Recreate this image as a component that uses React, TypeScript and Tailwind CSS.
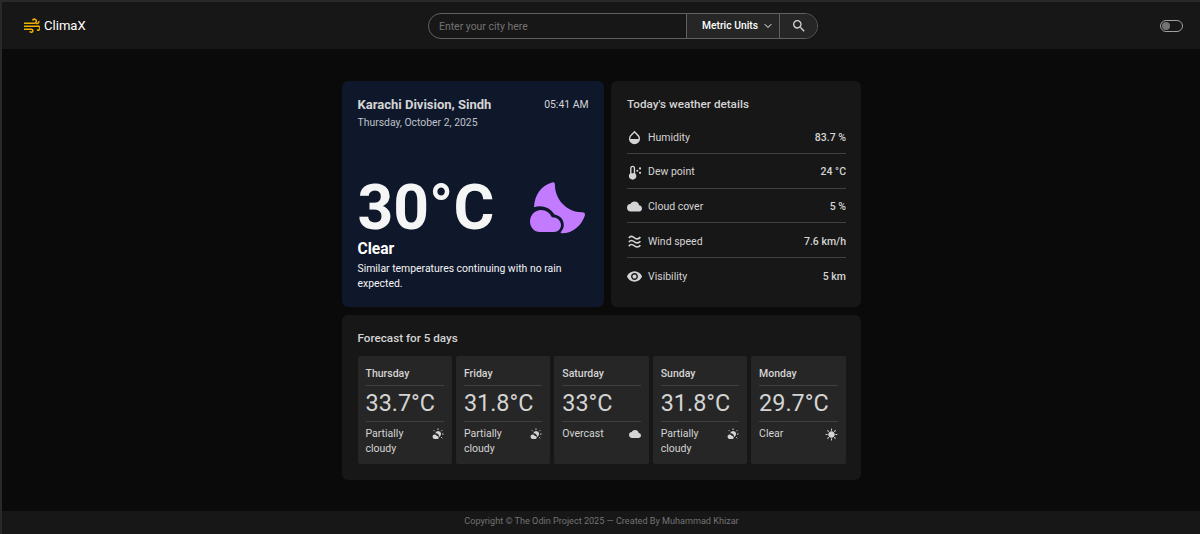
import React from 'react';
import { MdCloud, MdOpacity, MdRemoveRedEye, MdSearch, MdSunny } from 'react-icons/md';
import { ChevronDown } from 'lucide-react';

const WindIcon = () => (
  <svg viewBox="0 0 24 22" className="w-[16px] h-[15px]" fill="none" stroke="#f0b100" strokeWidth="2.300">
    <path d="M0 7.500H15.500A3 3 0 1 0 12.800 3.500M0 12H20.500A3 3 0 1 1 19.500 17.500M0 16.500H11A2.300 2.300 0 1 1 8.800 19.500M18 8H20A2.500 2.500 0 0 0 22 4.500" />
  </svg>
);

const MoonCloudIcon = () => (
  <svg viewBox="0 0 56 53" className="w-[56px] h-[53px]" fill="#c27aff">
    <path d="M4 25.200C4.500 13 11 3.500 22 .4Q25 -.3 24.900 2.500C25 18 37 30 51.500 30.300Q55.500 30 54.900 33.500C51.500 43.500 43 51.500 31.500 51.300L30.500 50.500C34 47 34.500 43 33 39C31.500 35 27.500 33 24.500 32.500C20 25 11 22.500 4 25.200Z" />
    <path d="M10 50C4 50 0 45 0 39.500C0 33 5 28 11 28C16 28 20 31 21.800 35.200C27 35 31 38.500 31 43C31 47 28 50 24 50Z" />
  </svg>
);

const DewPointIcon = () => (
  <svg viewBox="0 0 24 24" className="w-[15px] h-[15px] shrink-0" fill="currentColor">
    <path fillRule="evenodd" d="M9 1a4 4 0 0 0-4 4v8a6 6 0 1 0 8 0V5a4 4 0 0 0-4-4Zm-1.800 12V5a1.800 1.800 0 1 1 3.600 0v8Z" />
    <circle cx="16.500" cy="9" r="1.600" />
    <circle cx="20.800" cy="5.500" r="1.800" />
    <circle cx="20.800" cy="12.500" r="1.800" />
  </svg>
);

const WavesIcon = () => (
  <svg viewBox="0 0 24 24" className="w-[15px] h-[15px] shrink-0" fill="none" stroke="currentColor" strokeWidth="2.500">
    <path d="M3 6.500C5.500 3 8 3 12 6S18.500 8.500 21.500 5M3 13C5.500 9.500 8 9.500 12 12.500S18.500 15 21.500 11.500M3 19.500C5.500 16 8 16 12 19S18.500 21.500 21.500 18" />
  </svg>
);

const PartlyCloudyIcon = () => (
  <svg viewBox="0 0 24 24" className="w-[12px] h-[12px] shrink-0" fill="currentColor">
    <path d="M12 6a6 6 0 0 1 5 9.500l-3 2.500a6 6 0 0 0-7.500-7A6 6 0 0 1 12 6Z" />
    <path d="M5.500 22a4.500 4.500 0 1 1 4.300-6A3 3 0 1 1 11 22Z" />
    <path stroke="currentColor" strokeWidth="2" d="M12 1v3M3.500 4.500l2 2M20.500 4.500l-2 2M23 12h-3M18.500 18.500l2 2" />
  </svg>
);

const details = [
  { icon: <MdOpacity className="w-[15px] h-[15px] scale-110" />, label: 'Humidity', value: '83.7 %' },
  { icon: <DewPointIcon />, label: 'Dew point', value: '24 °C' },
  { icon: <MdCloud className="w-[15px] h-[15px]" />, label: 'Cloud cover', value: '5 %' },
  { icon: <WavesIcon />, label: 'Wind speed', value: '7.6 km/h' },
  { icon: <MdRemoveRedEye className="w-[15px] h-[15px] scale-110" />, label: 'Visibility', value: '5 km' },
];

const forecast = [
  { day: 'Thursday', temp: '33.7°C', text: 'Partially cloudy', icon: <PartlyCloudyIcon /> },
  { day: 'Friday', temp: '31.8°C', text: 'Partially cloudy', icon: <PartlyCloudyIcon /> },
  { day: 'Saturday', temp: '33°C', text: 'Overcast', icon: <MdCloud className="w-[12px] h-[12px] shrink-0" /> },
  { day: 'Sunday', temp: '31.8°C', text: 'Partially cloudy', icon: <PartlyCloudyIcon /> },
  { day: 'Monday', temp: '29.7°C', text: 'Clear', icon: <MdSunny className="w-[13px] h-[13px] shrink-0" /> },
];

function Header() {
  return (
    <header className="h-[47px] bg-[#171717] flex items-center pl-[22px] pr-[17px]">
      <div className="w-[404px] flex items-center gap-[4px] text-white">
        <WindIcon />
        <span className="text-[13.100px] leading-[16px]">ClimaX</span>
      </div>
      <div className="flex w-[390px] h-[26px] rounded-full border border-[#606060] overflow-hidden text-[10.450px]">
        <input className="w-[257px] px-[10px] pt-[2px] placeholder:text-[#737373] outline-none" placeholder="Enter your city here" />
        <button className="w-[94px] bg-[#262626] border-x border-[#606060] text-white text-[10.300px] font-medium flex items-center justify-end gap-[4px] pr-[5px]">
          <span>Metric Units</span> <ChevronDown className="w-[12px] h-[12px]" />
        </button>
        <button className="flex-1 bg-[#262626] text-[#d4d4d4] flex items-center justify-center">
          <MdSearch className="w-[16px] h-[16px]" />
        </button>
      </div>
      <div className="ml-auto w-[23px] h-[12px] rounded-full border border-[#a1a1a1] p-px">
        <div className="w-2 h-2 rounded-full bg-[#737373]" />
      </div>
    </header>
  );
}

function CurrentWeather() {
  return (
    <section className="w-[262px] h-[226px] rounded-md bg-[#0f172b] px-[15.500px] pt-[15px] flex flex-col">
      <div className="flex justify-between text-[#d4d4d4]">
        <h2 className="text-[13px] leading-[18px] font-bold">Karachi Division, Sindh</h2>
        <span className="text-[10.400px] leading-[17px]">05:41 AM</span>
      </div>
      <p className="text-[10.400px] leading-[17px] text-[#bfc2c9]">Thursday, October 2, 2025</p>
      <div className="mt-[48px] h-[58px] flex justify-between items-center pr-[3px]">
        <span className="text-[62.400px] leading-[58px] font-bold text-[#f5f5f5]">30°C</span>
        <MoonCloudIcon />
      </div>
      <h3 className="mt-[2px] text-[15.600px] leading-[20px] font-bold text-white">Clear</h3>
      <p className="text-[10.420px] leading-[15.300px] mt-[2px] text-[#f5f5f5]">Similar temperatures continuing with no rain expected.</p>
    </section>
  );
}

function WeatherDetails() {
  return (
    <section className="w-[250px] h-[226px] rounded-md bg-[#171717] pl-[16px] pr-[15px] pt-[14px] text-[#d4d4d4]">
      <h2 className="text-[11.700px] leading-[18px] font-medium">Today's weather details</h2>
      <ul className="mt-[6px] divide-y divide-[#404040]">
        {details.map((item) => (
          <li key={item.label} className="h-[34.750px] pt-[3px] flex items-center gap-[6px] text-[10.500px]">
            {item.icon}
            <span>{item.label}</span>
            <span className="ml-auto font-medium">{item.value}</span>
          </li>
        ))}
      </ul>
    </section>
  );
}

function Forecast() {
  return (
    <section className="h-[165px] rounded-md bg-[#171717] px-[15.500px] pt-[14px] text-[#d4d4d4]">
      <h2 className="text-[11.700px] leading-[18px] font-medium">Forecast for 5 days</h2>
      <div className="mt-[9px] grid grid-cols-5 gap-[4px]">
        {forecast.map((item) => (
          <div key={item.day} className="h-[108px] rounded-[2px] bg-[#262626] px-[8px] pt-[10px] text-[10.500px] leading-[15.300px]">
            <h3 className="font-medium h-[19px]">{item.day}</h3>
            <p className="h-[37px] border-y border-[#404040] text-[23.400px] leading-[34px]">{item.temp}</p>
            <div className="flex justify-between pt-[4px]">
              <span className="w-[50px]">{item.text}</span>
              <span className="pt-[2px]">{item.icon}</span>
            </div>
          </div>
        ))}
      </div>
    </section>
  );
}

export default function App() {
  return (
    <div className="h-[534px] bg-[#0a0a0a] border-t-2 border-l-2 border-[#292929] flex flex-col font-[Roboto,sans-serif]">
      <Header />
      <main className="w-[519px] ml-[340px] mt-[32px] flex-1 flex flex-col gap-[8px]">
        <div className="flex justify-between">
          <CurrentWeather />
          <WeatherDetails />
        </div>
        <Forecast />
      </main>
      <footer className="h-[23px] pb-px pl-px bg-[#171717] text-[#737373] text-[9.100px] flex items-center justify-center">
        Copyright © The Odin Project 2025 — Created By Muhammad Khizar
      </footer>
    </div>
  );
}
